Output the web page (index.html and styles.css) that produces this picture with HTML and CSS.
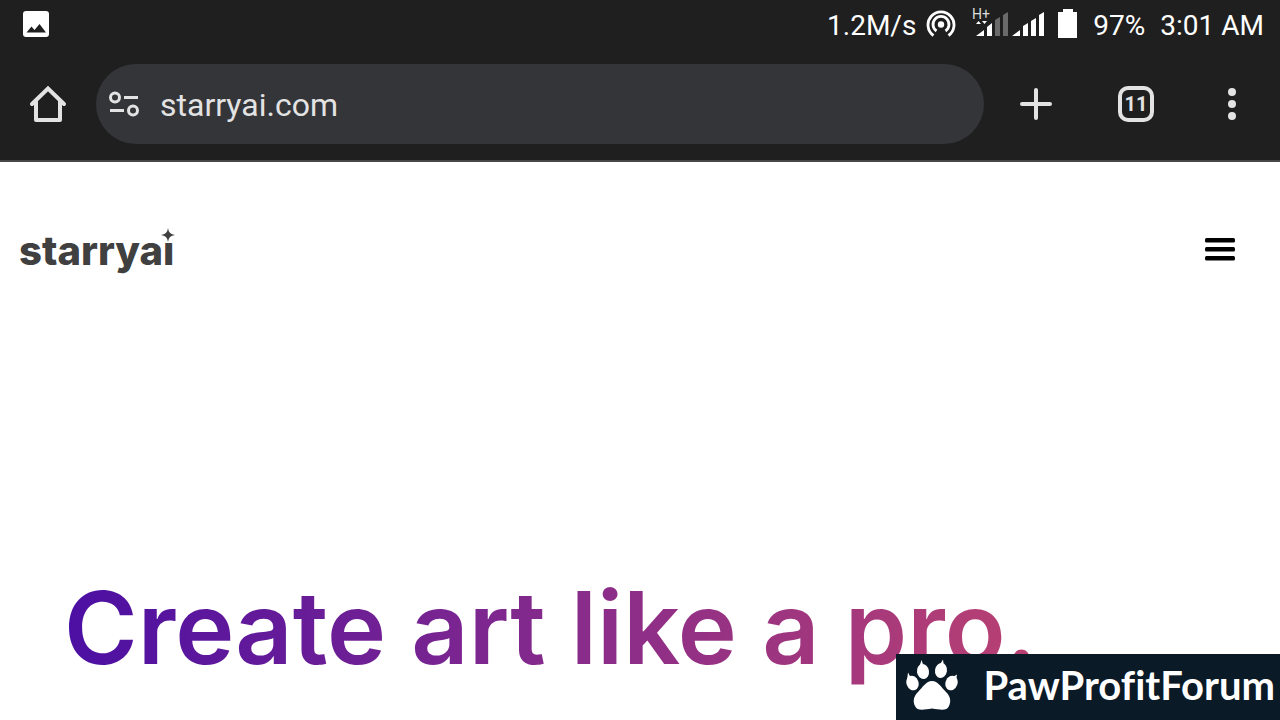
FILE: index.html
```html
<!DOCTYPE html>
<html lang="en">
<head>
<meta charset="utf-8">
<meta name="viewport" content="width=device-width, initial-scale=1">
<title>starryai</title>
<link rel="stylesheet" href="styles.css">
</head>
<body>
<div class="screen">
  <div class="status">
    <svg class="photo" width="26" height="26" viewBox="0 0 26 26" aria-hidden="true"><rect width="26" height="26" rx="3" fill="#fff"/><path d="M3.500 21.500 8.500 15.500 11.500 19 16.500 13 23 21.500Z" fill="#1f1f1f"/></svg>
    <span class="speed">1.2M/s</span>
    <svg class="hotspot" width="30" height="30" viewBox="0 0 30 30" fill="none" stroke="#fff" stroke-width="2.800" aria-hidden="true"><path d="M7.500 26.500A13 13 0 1 1 22.500 26.500"/><path d="M10.500 22A8 8 0 1 1 19.500 22"/><circle cx="15" cy="15.500" r="3.200" fill="#fff" stroke="none"/></svg>
    <svg class="signal" width="74" height="32" viewBox="0 0 74 32" fill="#fff" aria-hidden="true"><text x="0" y="11" class="net">H+</text><path d="M4 16 6.500 13 9 16ZM10 13H15L12.500 16ZM4 28 12 22V28ZM15 19 20 15V28H15ZM40 28 48 22V28ZM51 18 56 15V28H51ZM59 13 64 10V28H59ZM67 7 72 4V28H67Z"/><path fill="#6a6a6a" d="M23 12 28 9V28H23ZM31 7 36 4V28H31Z"/></svg>
    <svg class="battery" width="20" height="30" viewBox="0 0 20 30" aria-hidden="true"><path fill="#fff" d="M5 0H15V3H19V29H0V3H5Z"/></svg>
    <span class="level">97%</span>
    <span>3:01 AM</span>
  </div>
  <header class="toolbar">
    <button class="icon" aria-label="Home"><svg width="40" height="40" viewBox="0 0 40 40" fill="none" stroke="#e3e3e3" stroke-width="4" stroke-linejoin="round" stroke-linecap="round"><path d="M8 17V36H32V17"/><path d="M4 20 20 4.500 36 20" stroke-linejoin="miter"/></svg></button>
    <div class="address">
      <button class="icon site" aria-label="Site settings"><svg width="32" height="28" viewBox="0 0 32 28" fill="none" stroke="#e3e3e3" stroke-width="3"><circle cx="7" cy="7.500" r="4.500"/><path d="M16 7.500H30M2 20.500H16"/><circle cx="25" cy="20.500" r="4.500"/></svg></button>
      <input class="url" type="text" value="starryai.com" aria-label="Address">
    </div>
    <div class="actions">
      <button class="icon" aria-label="New tab"><svg width="32" height="32" viewBox="0 0 32 32" stroke="#e3e3e3" stroke-width="4" stroke-linecap="round"><path d="M16 2V30M2 16H30"/></svg></button>
      <button class="tabs" aria-label="11 open tabs">11</button>
      <button class="icon" aria-label="More"><svg width="8" height="32" viewBox="0 0 8 32" fill="#e3e3e3"><circle cx="4" cy="4" r="4"/><circle cx="4" cy="16" r="4"/><circle cx="4" cy="28" r="4"/></svg></button>
    </div>
  </header>
  <main class="page">
    <nav class="nav">
      <a class="logo" href="#">starryai<svg class="star" width="14" height="14" viewBox="0 0 14 14" aria-hidden="true"><path fill="#404040" d="M7 0Q7.600 6.400 14 7 7.600 7.600 7 14 6.400 7.600 0 7 6.400 6.400 7 0Z"/><circle cx="7" cy="7" r="2.300" fill="#404040"/></svg></a>
      <button class="icon" aria-label="Menu"><svg width="30" height="24" viewBox="0 0 30 24"><rect y="1" width="30" height="4.500" rx="1.500"/><rect y="10" width="30" height="4.500" rx="1.500"/><rect y="19" width="30" height="4.500" rx="1.500"/></svg></button>
    </nav>
    <h1 class="title">Create art like a pro.</h1>
  </main>
  <div class="badge">
    <svg width="54" height="54" viewBox="0 0 54 54" fill="#fff" aria-hidden="true"><path d="M27 23C33 23 36 29 41 34 46 39 46 44 44 48 42 53 36 52 27 50.500 18 52 12 53 10 48 8 44 8 39 13 34 18 29 21 23 27 23Z"/><ellipse cx="7.500" cy="25" rx="6" ry="7.500" transform="rotate(-20 7.500 25)"/><ellipse cx="18" cy="13.500" rx="6" ry="7.500" transform="rotate(-8 18 13.500)"/><ellipse cx="36" cy="12.500" rx="6" ry="7.500" transform="rotate(8 36 12.500)"/><ellipse cx="46.500" cy="25" rx="6" ry="7.500" transform="rotate(20 46.500 25)"/><path d="M2 22 3 14.500 6 20ZM14 10 16.500 2 19 9ZM34 8 38 1.500 39 9ZM46 20 52 16.500 51 23Z"/></svg>
    <span>PawProfitForum</span>
  </div>
</div>
</body>
</html>
```
FILE: styles.css
```css
* { box-sizing: border-box; }
body { margin: 0; font-family: Roboto, sans-serif; background: #fff; }
button { border: 0; padding: 0; background: none; color: inherit; font: inherit; }
svg { display: block; flex: none; }
.screen { position: relative; height: 100vh; overflow: hidden; }
.status { display: flex; align-items: center; height: 48px; padding: 0 16px 0 23px; background: #1f1f1f; color: #fff; font-size: 28px; line-height: 44px; white-space: nowrap; }
.status span { padding-top: 4px; }
.speed { margin-left: auto; }
.hotspot { margin-left: 10px; }
.signal { margin-left: 16px; overflow: visible; }
.net { font-size: 14px; line-height: 16px; fill: #ddd; }
.battery { margin-left: 12px; }
.level { margin: 0 15px; }
.toolbar { display: flex; align-items: center; height: 114px; background: #1f1f1f; padding: 0 44px 0 28px; border-bottom: 2px solid #474747; color: #e3e3e3; }
.icon { display: flex; align-items: center; justify-content: center; flex: none; }
.address { display: flex; align-items: center; flex: 1; height: 80px; margin: 0 36px 0 28px; padding: 0 24px 0 12px; border-radius: 40px; background: #343539; }
.url { flex: 1; min-width: 0; margin-left: 20px; padding: 2px 0 0; border: 0; outline: 0; background: none; color: #e3e3e3; font: 32px/40px Roboto, sans-serif; }
.actions { display: flex; align-items: center; gap: 66px; }
.actions .icon:last-child { margin-left: 8px; }
.tabs { width: 36px; height: 36px; border: 4px solid #e3e3e3; border-radius: 10px; font-size: 20px; font-weight: 700; line-height: 28px; text-align: center; }
.nav { display: flex; align-items: center; justify-content: space-between; height: 174px; padding: 0 45px 0 19px; }
.logo { position: relative; padding-top: 4px; color: #404040; font: 800 40px/48px Inter, sans-serif; text-decoration: none; }
.star { position: absolute; top: 5px; right: -1px; background: #fff; }
.title { width: max-content; margin: 228px 64px 0; font: 600 100px/128px Inter, sans-serif; color: transparent; background: linear-gradient(90deg, #4b0fa3, #852a8c 50%, #b94172); background-clip: text; -webkit-background-clip: text; }
.badge { position: absolute; right: 0; bottom: 0; display: flex; align-items: center; gap: 24px; height: 66px; padding: 0 5px 4px 9px; background: #0b1a27; color: #fff; font: 700 40px/48px Lato, sans-serif; font-variant-ligatures: none; }
```
